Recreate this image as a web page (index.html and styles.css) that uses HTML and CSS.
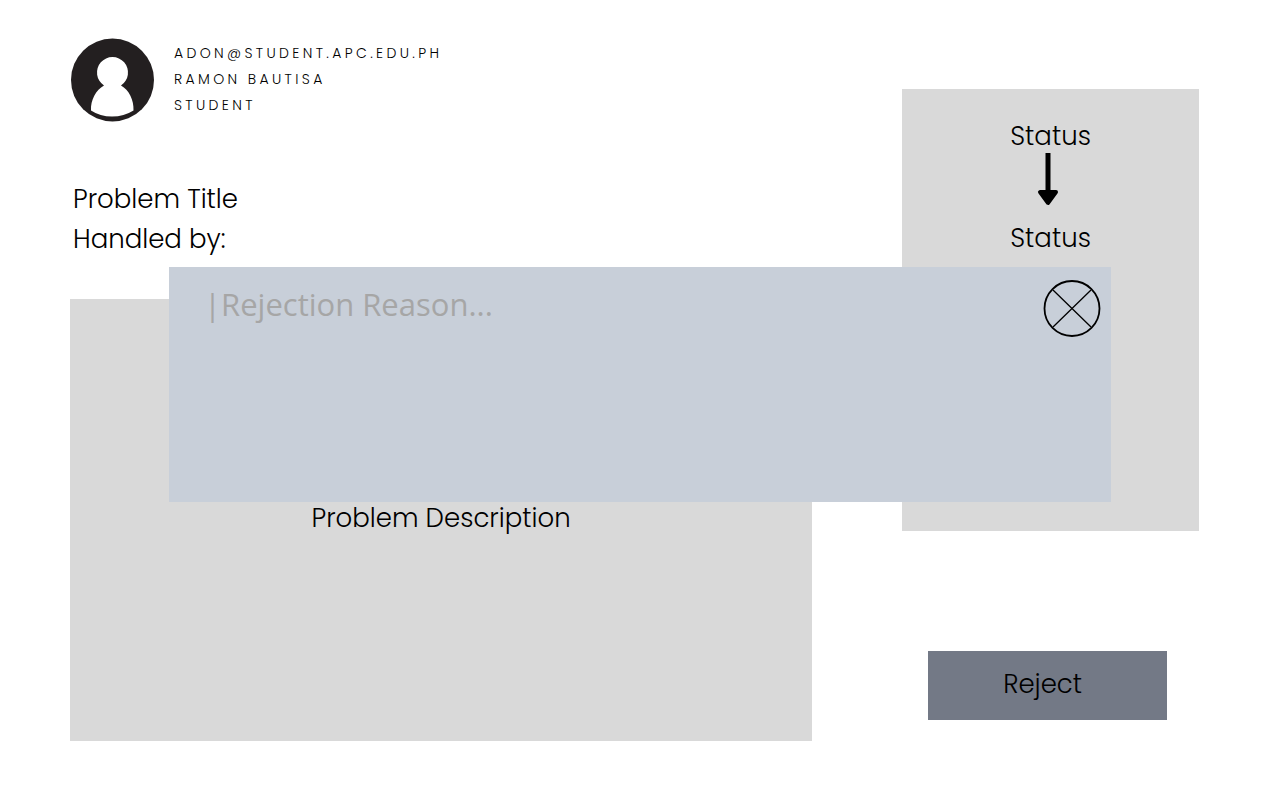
FILE: index.html
```html
<!DOCTYPE html>
<html lang="en">
<head>
  <meta charset="utf-8">
  <meta name="viewport" content="width=device-width, initial-scale=1">
  <title>Problem Title</title>
  <link rel="stylesheet" href="styles.css">
</head>
<body>
  <main class="page">
    <section class="ticket">
      <header class="profile">
        <svg class="avatar" viewBox="0 0 84 84" aria-hidden="true">
          <circle cx="42.500" cy="42" r="41.500" fill="#231f20"/>
          <path d="M34 47.500A15.500 15.500 0 1 1 51 47.500C59 52 64 62 63.500 72.500Q54 78.500 42 78.500Q30 78.500 21 72.500C20.500 62 26 52 34 47.500Z" fill="#fff"/>
        </svg>
        <div class="profile-lines">
          <div>ADON@STUDENT.APC.EDU.PH</div>
          <div>RAMON BAUTISA</div>
          <div>STUDENT</div>
        </div>
      </header>
      <div class="summary">
        <h1 class="summary-line">Problem Title</h1>
        <p class="summary-line">Handled by:</p>
      </div>
      <div class="description">Problem Description</div>
    </section>

    <aside class="side">
      <div class="status-panel">
        <div>Status</div>
        <svg class="arrow" viewBox="0 0 22 54" aria-hidden="true">
          <path d="M11 0V40" stroke="#000" stroke-width="5"/>
          <path d="M3 39H19L11 50Z" stroke="#000" stroke-width="4" stroke-linejoin="round"/>
        </svg>
        <div>Status</div>
      </div>
      <button class="reject" type="button">Reject</button>
    </aside>

    <form class="dialog">
      <textarea class="reason" aria-label="Rejection reason" placeholder="|Rejection Reason..."></textarea>
      <button class="close" type="button" aria-label="Close">
        <svg viewBox="0 0 58 58" aria-hidden="true">
          <circle cx="29" cy="28.500" r="27.500" fill="none" stroke="#000" stroke-width="1.800"/>
          <path d="M10 10L48 47M48 10L10 47" stroke="#000" stroke-width="1.300"/>
        </svg>
      </button>
    </form>
  </main>
</body>
</html>
```
FILE: styles.css
```css
* {
  box-sizing: border-box;
}

body {
  margin: 0;
  background: #fff;
  color: #000;
  font-family: Poppins, Inter, sans-serif;
  font-size: 26px;
  font-weight: 300;
  line-height: 40px;
}

.page {
  position: relative;
  display: grid;
  grid-template-columns: minmax(0, 5fr) minmax(0, 2fr);
  column-gap: 90px;
  min-height: 100vh;
  padding: 38px 81px 59px 70px;
}

.ticket {
  display: flex;
  flex-direction: column;
}

.profile {
  display: flex;
  align-items: center;
  gap: 20px;
}

.avatar {
  width: 84px;
  height: 84px;
}

.profile-lines {
  padding-bottom: 2px;
  font-size: 14px;
  line-height: 26px;
  letter-spacing: 0.24em;
}

.summary {
  margin-top: 57px;
  padding-left: 3px;
}

.summary-line {
  margin: 0;
  font-size: 26px;
  font-weight: inherit;
}

.description {
  flex: 1;
  display: flex;
  align-items: center;
  justify-content: center;
  min-height: 320px;
  margin-top: 40px;
  padding-bottom: 4px;
  background: #d9d9d9;
}

.side {
  display: flex;
  flex-direction: column;
  justify-content: space-between;
  padding: 51px 0 21px;
}

.status-panel {
  display: flex;
  flex-direction: column;
  align-items: center;
  min-height: 442px;
  padding-top: 27px;
  background: #d9d9d9;
}

.arrow {
  width: 22px;
  height: 54px;
  margin: -3px 6px 11px 0;
}

.reject {
  height: 69px;
  padding: 0 10px 4px 0;
  margin: 0 32px 0 26px;
  border: 0;
  background: #737986;
  color: #000;
  font: inherit;
}

.dialog {
  position: absolute;
  top: 267px;
  left: 169px;
  right: 169px;
  display: flex;
  align-items: flex-start;
  min-height: 235px;
  padding: 13px 10px 13px 35px;
  background: #c8cfd9;
}

.reason {
  flex: 1;
  min-width: 0;
  height: 200px;
  padding: 3px 0 0;
  border: 0;
  outline: 0;
  resize: none;
  background: transparent;
  color: #000;
  font: 400 31px/42px "Open Sans", sans-serif;
}

.reason::placeholder {
  color: #a6a6a6;
  opacity: 1;
}

.close {
  width: 58px;
  height: 58px;
  padding: 0;
  border: 0;
  background: none;
}

.close svg {
  display: block;
}
```
